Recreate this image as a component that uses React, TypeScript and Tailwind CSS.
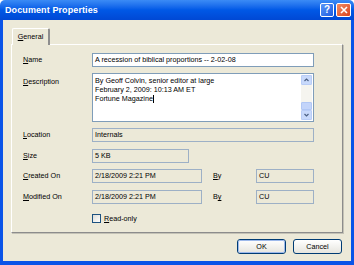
import React from "react"

function U({ children }: { children: React.ReactNode }) {
  return <span className="underline underline-offset-[1px]">{children}</span>
}

function Field({ w, ro, children }: { w: string; ro?: boolean; children: React.ReactNode }) {
  return (
    <div
      className={`${w} h-[14px] flex items-center pl-[2px] border ${
        ro ? "border-[#9DB0C6] bg-[#ECE9D8]" : "border-[#7F9DB9] bg-white"
      }`}
    >
      {children}
    </div>
  )
}

function Row({ label, children, className = "" }: { label: React.ReactNode; children: React.ReactNode; className?: string }) {
  return (
    <div className={`flex items-center ${className}`}>
      <div className="w-[69px]">{label}</div>
      {children}
    </div>
  )
}

function XpButton({ children, def }: { children: React.ReactNode; def?: boolean }) {
  return (
    <div className="w-[49px] h-[15px] rounded-[3px] border border-[#003C74] bg-gradient-to-b from-[#FFFFFF] to-[#E6E5DE] flex items-center justify-center">
      <div
        className={`w-full h-full rounded-[2px] flex items-center justify-center border ${
          def ? "border-[#9DB9EB]" : "border-transparent"
        }`}
      >
        {children}
      </div>
    </div>
  )
}

export default function App() {
  return (
    <div className="w-[354px] h-[265px] flex flex-col font-['Liberation_Sans',Arial,sans-serif] text-[7.2px] leading-none text-black">
      {/* Title bar */}
      <div className="h-[20px] shrink-0 rounded-t-[5px] bg-gradient-to-b from-[#3B8BF5] via-[#0058E6] to-[#0048D4] flex items-center pl-[5px] pr-[3px]">
        <span className="text-[9px] font-bold text-white tracking-[0.1px]">Document Properties</span>
        <div className="ml-auto flex gap-[2px]">
          <div className="w-[14px] h-[14px] rounded-[2px] border border-white bg-gradient-to-br from-[#5A96F8] to-[#1D5BE0] flex items-center justify-center text-white font-bold text-[10px]">
            ?
          </div>
          <div className="w-[15px] h-[14px] rounded-[2px] border border-white bg-gradient-to-br from-[#F08B63] to-[#D8421A] flex items-center justify-center">
            <svg width="8" height="8" viewBox="0 0 8 8">
              <path d="M1 1L7 7M7 1L1 7" stroke="white" strokeWidth="1.6" />
            </svg>
          </div>
        </div>
      </div>

      {/* Client area */}
      <div className="flex-1 border-x-[3px] border-b-[4px] border-[#0A54E8] bg-[#ECE9D8] pl-[8px] pt-[8px]">
        {/* Tab strip */}
        <div className="h-[16px] flex">
          <div className="ml-[1px] w-[38px] h-[17px] border-t border-l border-white border-r-2 border-r-[#8E8E8E] rounded-t-[2px] bg-[#ECE9D8] flex items-center justify-center relative z-10">
            <span>
              <U>G</U>eneral
            </span>
          </div>
        </div>

        {/* Panel */}
        <div className="w-[332px] h-[189px] border-t border-l border-white border-r border-b border-r-[#8C8C8C] border-b-[#8C8C8C] shadow-[1px_1px_0_#C4C2B6] pl-[11px] pt-[8px]">
          <Row label={<><U>N</U>ame</>}>
            <Field w="w-[222px]">A recession of biblical proportions -- 2-02-08</Field>
          </Row>

          <div className="flex items-start mt-[6px]">
            <div className="w-[69px] pt-[5px]">
              <U>D</U>escription
            </div>
            <div className="w-[222px] h-[49px] border border-[#7F9DB9] bg-white flex">
              <div className="flex-1 pl-[2px] pt-[2px] leading-[9px]">
                <div>By Geoff Colvin, senior editor at large</div>
                <div>February 2, 2009: 10:13 AM ET</div>
                <div className="flex items-center">
                  Fortune Magazine<span className="inline-block w-[1px] h-[8px] bg-black ml-[0.5px]" />
                </div>
              </div>
              {/* scrollbar */}
              <div className="w-[11px] mr-[1px] my-[1px] bg-[#F5F4EF] flex flex-col">
                <div className="h-[10px] rounded-[1px] border border-[#B9CDF7] bg-[#C8D9FB] flex items-center justify-center">
                  <svg width="5" height="4" viewBox="0 0 5 4">
                    <path d="M0.5 3L2.5 1L4.5 3" stroke="#4D6185" strokeWidth="1.2" fill="none" />
                  </svg>
                </div>
                <div className="flex-1" />
                <div className="h-[8px] rounded-[1px] border border-[#B1C7F5] bg-[#C3D4FA]" />
                <div className="h-[10px] rounded-[1px] border border-[#B9CDF7] bg-[#C8D9FB] flex items-center justify-center">
                  <svg width="5" height="4" viewBox="0 0 5 4">
                    <path d="M0.5 1L2.5 3L4.5 1" stroke="#4D6185" strokeWidth="1.2" fill="none" />
                  </svg>
                </div>
              </div>
            </div>
          </div>

          <Row label={<><U>L</U>ocation</>} className="mt-[6px]">
            <Field w="w-[222px]" ro>Internals</Field>
          </Row>

          <Row label={<><U>S</U>ize</>} className="mt-[7px]">
            <Field w="w-[97px]" ro>5 KB</Field>
          </Row>

          <Row label={<><U>C</U>reated On</>} className="mt-[6px]">
            <Field w="w-[110px]" ro>2/18/2009 2:21 PM</Field>
            <div className="w-[43px] ml-[11px]">
              <U>B</U>y
            </div>
            <Field w="w-[58px]" ro>CU</Field>
          </Row>

          <Row label={<><U>M</U>odified On</>} className="mt-[7px]">
            <Field w="w-[110px]" ro>2/18/2009 2:21 PM</Field>
            <div className="w-[43px] ml-[11px]">
              B<U>y</U>
            </div>
            <Field w="w-[58px]" ro>CU</Field>
          </Row>

          <div className="flex items-center mt-[10px] ml-[69px]">
            <div className="w-[9px] h-[9px] border border-[#1C5180] bg-gradient-to-br from-[#DCDCD7] to-white" />
            <span className="ml-[3px]">
              <U>R</U>ead-only
            </span>
          </div>
        </div>

        {/* Buttons */}
        <div className="w-[332px] mt-[6px] flex justify-end gap-[7px] pr-[1px]">
          <XpButton def>OK</XpButton>
          <XpButton>Cancel</XpButton>
        </div>
      </div>
    </div>
  )
}
